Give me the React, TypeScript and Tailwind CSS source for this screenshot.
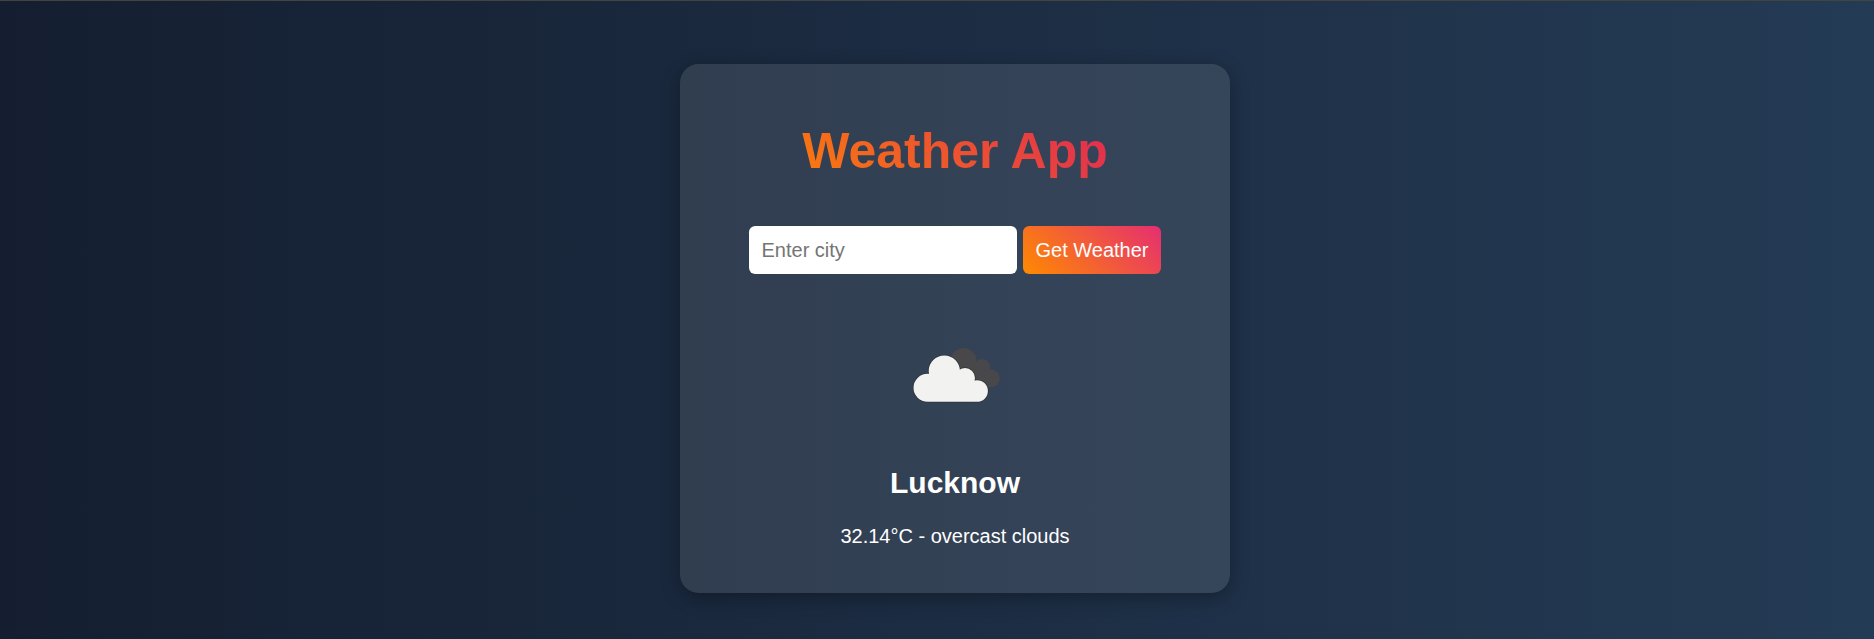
import { useState } from "react";

function CloudIcon() {
  return (
    <svg viewBox="0 0 125 125" className="block h-[125px] w-[125px]" role="img" aria-label="overcast clouds">
      <g fill="#48484a">
        <circle cx="70.5" cy="48" r="13" />
        <circle cx="89" cy="54" r="8" />
        <circle cx="97.8" cy="65.3" r="9" />
        <path d="M62 55 L82 48 L97 62 L97 74.3 L75 74 Z" />
      </g>
      <path
        fill="#f2f2f0"
        stroke="#24282c"
        strokeOpacity="0.6"
        strokeWidth="1.4"
        paintOrder="stroke"
        d="M20.5 74.8 a14 14 0 1 1 28 0 a14 14 0 1 1 -28 0 Z M35.7 58.1 a15.6 15.6 0 1 1 31.2 0 a15.6 15.6 0 1 1 -31.2 0 Z M62 65 a10 10 0 1 1 20 0 a10 10 0 1 1 -20 0 Z M73.3 78 a10.8 10.8 0 1 1 21.6 0 a10.8 10.8 0 1 1 -21.6 0 Z M34.5 88.8 L34.5 70 L51 58 L72 65 L84 78 L84 88.8 Z"
      />
    </svg>
  );
}

export default function App() {
  const [city, setCity] = useState("");

  return (
    <div className="flex h-[639px] w-full flex-col items-center border-t border-[#45433f] bg-linear-to-r from-[#141e30] to-[#243b55] pt-[63px] pl-[36px] font-['Liberation_Sans',Arial,sans-serif] text-white">
      <main className="flex h-[529px] w-[550px] flex-col items-center rounded-[18.75px] bg-white/10 px-[50px] pt-[59px] shadow-[0_5px_19px_rgba(0,0,0,0.3)]">
        <h1 className="w-full bg-[linear-gradient(45deg,#ff8a00,#da1b60)] bg-clip-text text-center text-[50px] leading-[57px] font-bold text-transparent">
          Weather App
        </h1>
        <form className="mt-[46px] flex gap-[6px]" onSubmit={(e) => e.preventDefault()}>
          <input
            value={city}
            onChange={(e) => setCity(e.target.value)}
            placeholder="Enter city"
            className="h-[48px] w-[268px] rounded-[6.25px] bg-white px-[12.5px] text-[20px] text-black placeholder:text-[#757575]"
          />
          <button
            type="submit"
            className="h-[48px] w-[138px] rounded-[6.25px] bg-[linear-gradient(45deg,#ff8a00,#e52e71)] text-[20px] whitespace-nowrap"
          >
            Get Weather
          </button>
        </form>
        <section className="mt-[39px] flex flex-col items-center">
          <CloudIcon />
          <h2 className="mt-[28px] text-[30px] leading-[34px] font-bold">Lucknow</h2>
          <p className="mt-[25px] text-[20px] leading-[23px]">32.14°C - overcast clouds</p>
        </section>
      </main>
    </div>
  );
}
